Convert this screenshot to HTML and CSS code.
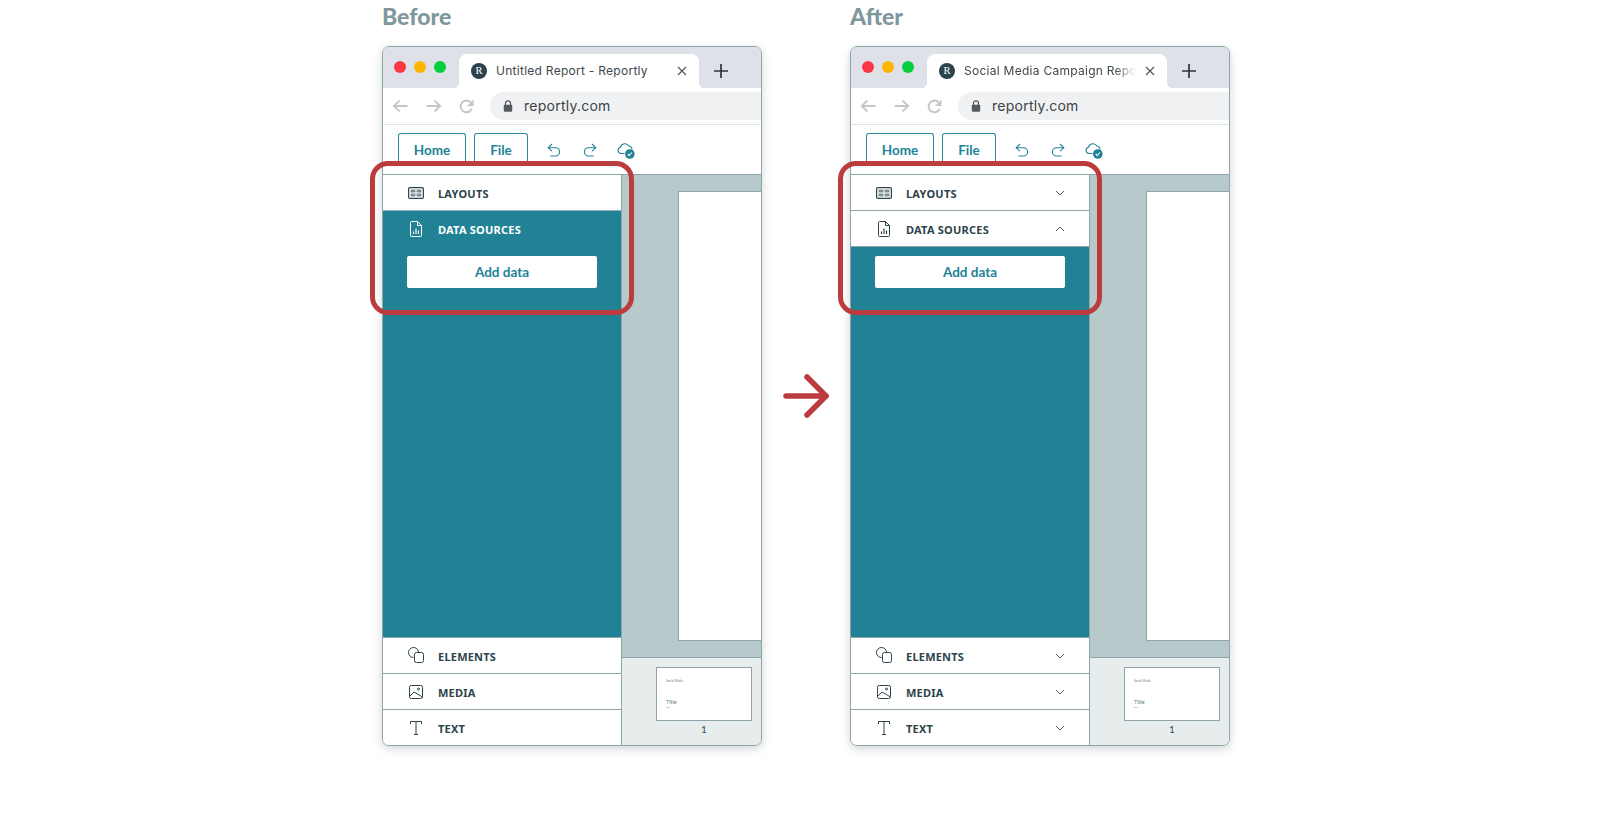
FILE: index.html
```html
<!DOCTYPE html>
<html lang="en">
<head>
<meta charset="utf-8">
<title>Before and After</title>
<link rel="stylesheet" href="styles.css">
</head>
<body>
<svg class="defs" width="0" height="0" aria-hidden="true">
  <defs>
    <symbol id="i-layouts" viewBox="0 0 16 12"><rect x=".6" y=".6" width="14.800" height="10.800" rx="1.200" fill="none" stroke="currentColor" stroke-width="1.200"/><path d="M2.500 2.400h5v3h-5zM8.500 2.400h5v3h-5zM2.500 6.600h5v3h-5zM8.500 6.600h5v3h-5z" fill="currentColor" opacity=".6"/></symbol>
    <symbol id="i-doc" viewBox="0 0 12 16"><path d="M1.500.5h6l4 4v10a1 1 0 0 1-1 1h-9a1 1 0 0 1-1-1v-13a1 1 0 0 1 1-1z" fill="none" stroke="currentColor"/><path d="M7.500.5v4h4" fill="none" stroke="currentColor"/><path d="M3.500 10.500V13M6 7.500V13M8.500 9.500V13" fill="none" stroke="currentColor" stroke-width="1.200"/></symbol>
    <symbol id="i-elements" viewBox="0 0 16 16"><path d="M5.500 10.500A5 5 0 1 1 10.500 5" fill="none" stroke="currentColor"/><rect x="6.500" y="5.500" width="9" height="10" rx="2" fill="none" stroke="currentColor"/></symbol>
    <symbol id="i-media" viewBox="0 0 14 14"><rect x=".5" y=".5" width="13" height="13" rx="1.800" fill="none" stroke="currentColor"/><circle cx="9.500" cy="4" r="1" fill="none" stroke="currentColor"/><path d="M.5 11.500 5 7l8.500 5" fill="none" stroke="currentColor"/></symbol>
    <symbol id="i-text" viewBox="0 0 12 14"><path d="M.5 3V.5h11V3M6 .5v13M4 13.500h4" fill="none" stroke="currentColor"/></symbol>
    <symbol id="i-down" viewBox="0 0 10 6"><path d="M1 1l4 4 4-4" fill="none" stroke="currentColor"/></symbol>
    <symbol id="i-up" viewBox="0 0 10 6"><path d="M1 5l4-4 4 4" fill="none" stroke="currentColor"/></symbol>
    <symbol id="i-back" viewBox="0 0 16 14"><path d="M15.500 7H1.800M7.500 1.500 1.800 7l5.700 5.500" fill="none" stroke="currentColor" stroke-width="1.800"/></symbol>
    <symbol id="i-forward" viewBox="0 0 16 14"><path d="M.5 7h13.700M8.500 1.500 14.200 7l-5.700 5.500" fill="none" stroke="currentColor" stroke-width="1.800"/></symbol>
    <symbol id="i-reload" viewBox="0 0 15 15"><path d="M12.700 9.800A5.800 5.800 0 1 1 11.600 3.400" fill="none" stroke="currentColor" stroke-width="2"/><path d="M14.500 .5v6.500H8z" fill="currentColor"/></symbol>
    <symbol id="i-lock" viewBox="0 0 10 12"><path d="M2.500 5V3.300a2.500 2.500 0 0 1 5 0V5" fill="none" stroke="currentColor" stroke-width="1.200"/><rect x=".8" y="4.800" width="8.400" height="7" rx="1" fill="currentColor"/></symbol>
    <symbol id="i-undo" viewBox="0 0 14 14"><path d="M5 1 1.200 4.800 5 8.200M1.200 4.800h7.300a4 4 0 0 1 0 8.200H3.500" fill="none" stroke="currentColor" stroke-width="1.100"/></symbol>
    <symbol id="i-redo" viewBox="0 0 14 14"><path d="M9 1l3.800 3.800L9 8.200M12.800 4.800H5.500a4 4 0 0 0 0 8.200h5" fill="none" stroke="currentColor" stroke-width="1.100"/></symbol>
    <symbol id="i-cloud" viewBox="0 0 18 17"><path d="M7.500 11.500H4a3.200 3.200 0 0 1-.5-6.300A4.500 4.500 0 0 1 11.800 4a3.300 3.300 0 0 1 3.200 3.500" fill="none" stroke="currentColor" stroke-width="1.100"/><circle cx="12.800" cy="12" r="4.800" fill="currentColor"/><path d="M10.700 12l1.500 1.500 2.700-3" fill="none" stroke="#fff" stroke-width="1.100"/></symbol>
    <symbol id="i-x" viewBox="0 0 10 10"><path d="M1 1l8 8M9 1l-8 8" fill="none" stroke="currentColor" stroke-width="1.100"/></symbol>
    <symbol id="i-plus" viewBox="0 0 14 14"><path d="M7 0v14M0 7h14" fill="none" stroke="currentColor" stroke-width="1.700"/></symbol>
  </defs>
</svg>
<main class="stage">
  <section class="shot">
    <h2 class="shot-title">Before</h2>
    <div class="window">
      <div class="strip">
        <span class="dot dot-red"></span><span class="dot dot-yellow"></span><span class="dot dot-green"></span>
        <div class="tab">
          <span class="favicon">R</span>
          <span class="tab-title">Untitled Report - Reportly</span>
          <svg class="tab-x"><use href="#i-x"/></svg>
        </div>
        <svg class="new-tab"><use href="#i-plus"/></svg>
      </div>
      <div class="nav">
        <svg class="nav-arrow"><use href="#i-back"/></svg>
        <svg class="nav-arrow"><use href="#i-forward"/></svg>
        <svg class="nav-reload"><use href="#i-reload"/></svg>
        <div class="address"><svg class="lock"><use href="#i-lock"/></svg><span>reportly.com</span></div>
      </div>
      <div class="toolbar">
        <span class="menu-tab menu-home">Home</span>
        <span class="menu-tab menu-file">File</span>
        <svg class="tool tool-undo"><use href="#i-undo"/></svg>
        <svg class="tool tool-redo"><use href="#i-redo"/></svg>
        <svg class="tool-cloud"><use href="#i-cloud"/></svg>
      </div>
      <div class="main">
        <aside class="sidebar">
          <div class="row"><svg class="ico ico-layouts"><use href="#i-layouts"/></svg><span class="label">LAYOUTS</span></div>
          <div class="row row-active"><svg class="ico ico-doc"><use href="#i-doc"/></svg><span class="label">DATA SOURCES</span></div>
          <div class="panel panel-before"><button class="add">Add data</button></div>
          <div class="row"><svg class="ico ico-elements"><use href="#i-elements"/></svg><span class="label">ELEMENTS</span></div>
          <div class="row"><svg class="ico ico-media"><use href="#i-media"/></svg><span class="label">MEDIA</span></div>
          <div class="row"><svg class="ico ico-text"><use href="#i-text"/></svg><span class="label">TEXT</span></div>
        </aside>
        <div class="work">
          <div class="canvas"><div class="page"></div></div>
          <div class="thumbs">
            <div class="thumb"><span class="t-head">Social Media</span><span class="t-title">Title</span><span class="t-sub">text</span></div>
            <span class="thumb-num">1</span>
          </div>
        </div>
      </div>
    </div>
    <div class="highlight"></div>
  </section>
  <div class="arrow">
    <svg class="arrow-svg" viewBox="0 0 46 44"><path d="M3 22h40M24 3l19 19-19 19" fill="none" stroke="#bc3b3d" stroke-width="5.500" stroke-linecap="round" stroke-linejoin="miter"/></svg>
  </div>
  <section class="shot">
    <h2 class="shot-title">After</h2>
    <div class="window">
      <div class="strip">
        <span class="dot dot-red"></span><span class="dot dot-yellow"></span><span class="dot dot-green"></span>
        <div class="tab">
          <span class="favicon">R</span>
          <span class="tab-title tab-fade">Social Media Campaign Repor</span>
          <svg class="tab-x"><use href="#i-x"/></svg>
        </div>
        <svg class="new-tab"><use href="#i-plus"/></svg>
      </div>
      <div class="nav">
        <svg class="nav-arrow"><use href="#i-back"/></svg>
        <svg class="nav-arrow"><use href="#i-forward"/></svg>
        <svg class="nav-reload"><use href="#i-reload"/></svg>
        <div class="address"><svg class="lock"><use href="#i-lock"/></svg><span>reportly.com</span></div>
      </div>
      <div class="toolbar">
        <span class="menu-tab menu-home">Home</span>
        <span class="menu-tab menu-file">File</span>
        <svg class="tool tool-undo"><use href="#i-undo"/></svg>
        <svg class="tool tool-redo"><use href="#i-redo"/></svg>
        <svg class="tool-cloud"><use href="#i-cloud"/></svg>
      </div>
      <div class="main">
        <aside class="sidebar">
          <div class="row"><svg class="ico ico-layouts"><use href="#i-layouts"/></svg><span class="label">LAYOUTS</span><svg class="chev"><use href="#i-down"/></svg></div>
          <div class="row"><svg class="ico ico-doc"><use href="#i-doc"/></svg><span class="label">DATA SOURCES</span><svg class="chev"><use href="#i-up"/></svg></div>
          <div class="panel"><button class="add">Add data</button></div>
          <div class="row"><svg class="ico ico-elements"><use href="#i-elements"/></svg><span class="label">ELEMENTS</span><svg class="chev"><use href="#i-down"/></svg></div>
          <div class="row"><svg class="ico ico-media"><use href="#i-media"/></svg><span class="label">MEDIA</span><svg class="chev"><use href="#i-down"/></svg></div>
          <div class="row"><svg class="ico ico-text"><use href="#i-text"/></svg><span class="label">TEXT</span><svg class="chev"><use href="#i-down"/></svg></div>
        </aside>
        <div class="work">
          <div class="canvas"><div class="page"></div></div>
          <div class="thumbs">
            <div class="thumb"><span class="t-head">Social Media</span><span class="t-title">Title</span><span class="t-sub">text</span></div>
            <span class="thumb-num">1</span>
          </div>
        </div>
      </div>
    </div>
    <div class="highlight"></div>
  </section>
</main>
</body>
</html>
```

FILE: styles.css
```css
* { box-sizing: border-box; }
html, body { margin: 0; height: 100%; background: #fff; overflow: hidden; }
body { font-family: Lato, "Noto Sans", sans-serif; color: #2d444b; }
.defs { position: absolute; }

.stage { display: flex; padding-left: 382px; height: 826px; }
.shot { position: relative; width: 380px; flex: none; }
.shot-title { margin: 0; height: 46px; font-size: 23px; line-height: 32px; font-weight: 900; color: #7f989d; }

.window { width: 380px; height: 700px; border: 1px solid #8fa5a9; border-radius: 7px; overflow: hidden; background: #fff; box-shadow: 0 3px 10px rgba(50, 70, 75, .22); display: flex; flex-direction: column; }

.strip { height: 41px; flex: none; background: #dee1e8; display: flex; align-items: flex-start; padding: 14px 0 0 11px; }
.dot { width: 12px; height: 12px; border-radius: 50%; margin-right: 8px; flex: none; }
.dot-red { background: #fb3745; }
.dot-yellow { background: #fdb600; }
.dot-green { background: #06ce3e; }
.tab { position: relative; width: 240px; height: 34px; margin: -7px 0 0 5px; background: #fff; border-radius: 8px 8px 0 0; display: flex; align-items: center; padding: 0 0 0 12px; flex: none; }
.tab::before, .tab::after { content: ""; position: absolute; bottom: 0; width: 6px; height: 6px; }
.tab::before { left: -6px; background: radial-gradient(circle at 0 0, transparent 6px, #fff 6.500px); }
.tab::after { right: -6px; background: radial-gradient(circle at 100% 0, transparent 6px, #fff 6.500px); }
.favicon { width: 16px; height: 16px; border-radius: 50%; background: #2a434c; color: #fff; font: 10.500px/16px "Liberation Serif", serif; text-align: center; flex: none; }
.tab-title { margin-left: 9px; width: 175px; white-space: nowrap; font: 12px/16px Inter, sans-serif; letter-spacing: .27px; color: #3e474b; }
.tab-fade { width: 172px; flex: none; -webkit-mask-image: linear-gradient(to right, #000 88%, transparent 100%); mask-image: linear-gradient(to right, #000 88%, transparent 100%); }
.tab-x { width: 10px; height: 10px; color: #4a5357; position: absolute; right: 12px; top: 12px; }
.new-tab { width: 14px; height: 14px; color: #2f3437; margin: 3px 0 0 15px; flex: none; }

.nav { height: 36px; flex: none; display: flex; align-items: center; padding-left: 9px; }
.nav-arrow { width: 16px; height: 14px; color: #c4c7c9; margin-right: 18px; flex: none; }
.nav-reload { width: 15px; height: 15px; color: #c4c7c9; flex: none; margin-left: -1px; }
.address { margin-left: 16px; flex: 1; height: 28px; border-radius: 14px 0 0 14px; background: #f0f1f3; display: flex; align-items: center; padding-left: 13px; font: 14px/18px Inter, sans-serif; letter-spacing: .25px; color: #3b4347; }
.lock { width: 10px; height: 12px; color: #55595c; margin-right: 11px; }

.toolbar { height: 50px; flex: none; border-top: 1px solid #dfe5e6; padding: 8px 0 0 15px; display: flex; align-items: flex-start; }
.menu-tab { height: 31px; border: 1px solid #2e8a9f; border-bottom: 0; border-radius: 3px 3px 0 0; color: #218296; font-size: 13.500px; font-weight: 700; display: flex; align-items: center; justify-content: center; padding-top: 2px; flex: none; }
.menu-home { width: 68px; }
.menu-file { width: 54px; margin-left: 8px; }
.tool { width: 14px; height: 14px; color: #218296; margin-top: 10px; flex: none; }
.tool-undo { margin-left: 19px; }
.tool-redo { margin-left: 22px; }
.tool-cloud { width: 18px; height: 17px; color: #218296; margin: 9px 0 0 20px; flex: none; }

.main { flex: 1; min-height: 0; display: flex; }
.sidebar { width: 239px; flex: none; border-right: 1px solid #8fa5a9; display: flex; flex-direction: column; }
.row { height: 36px; flex: none; border-top: 1px solid #8fa5a9; display: flex; align-items: center; padding-left: 25px; background: #fff; color: #2d444b; position: relative; }
.row-active { background: #218296; color: #fff; border-top-color: #8fb4bd; }
.label { font: 700 11px/16px "Noto Sans", sans-serif; letter-spacing: .22px; position: absolute; left: 55px; top: 11px; }
.ico { flex: none; display: block; }
.ico-layouts { width: 16px; height: 12px; }
.ico-doc { width: 12px; height: 16px; margin-left: 2px; }
.ico-elements { width: 16px; height: 16px; margin-top: -1px; }
.ico-media { width: 14px; height: 14px; margin-left: 1px; }
.ico-text { width: 12px; height: 14px; margin-left: 2px; }
.chev { position: absolute; left: 204px; top: 15px; width: 10px; height: 6px; color: #4b5f66; }
.panel { flex: 1; min-height: 0; background: #218296; border-top: 1px solid #8fa5a9; padding: 9px 24px 0; }
.panel-before { border-top: 0; padding-top: 10px; }
.add { display: block; width: 190px; height: 32px; border: 0; border-radius: 2px; background: #fff; color: #218296; font: 700 13.500px/32px Lato, sans-serif; padding: 0; }

.work { flex: 1; min-width: 0; display: flex; flex-direction: column; }
.canvas { flex: 1; min-height: 0; background: #b7c9cb; border-top: 1px solid #8fa5a9; padding: 16px 0 0 56px; }
.page { height: 450px; background: #fff; border: 1px solid #8fa5a9; border-right: 0; }
.thumbs { height: 88px; flex: none; background: #e7ecec; border-top: 1px solid #8fa5a9; padding: 9px 0 0 34px; position: relative; }
.thumb { width: 96px; height: 54px; background: #fff; border: 1px solid #8fa5a9; position: relative; display: block; }
.t-head, .t-title, .t-sub { position: absolute; left: 9px; white-space: nowrap; color: #6b7b80; }
.t-head { top: 11px; font-size: 3px; line-height: 4px; }
.t-title { top: 31px; font-size: 5.500px; line-height: 6px; }
.t-sub { top: 38px; font-size: 2px; line-height: 3px; }
.thumb-num { display: block; width: 96px; text-align: center; font-size: 10px; line-height: 14px; margin-top: 1px; color: #3b4f55; }

.highlight { position: absolute; left: -12px; top: 161px; width: 264px; height: 154px; border: 5px solid #bc3b3d; border-radius: 18px; pointer-events: none; }

.arrow { width: 88px; flex: none; height: 700px; margin-top: 46px; display: flex; align-items: center; justify-content: center; }
.arrow-svg { width: 46px; height: 44px; margin-left: -1px; }
```
